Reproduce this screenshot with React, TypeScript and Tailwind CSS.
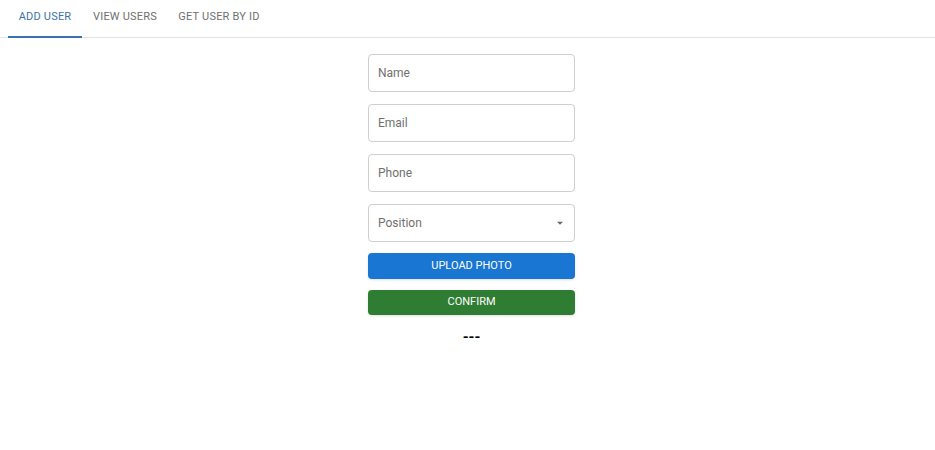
import React, { useState } from "react";

const tabs = ["ADD USER", "VIEW USERS", "GET USER BY ID"];

function Field({ label }: { label: string }) {
  return (
    <div className="h-[38px] w-full rounded border border-[#cfcfcf] flex items-center px-[9px] text-[12px] text-[#707070]">
      {label}
    </div>
  );
}

export default function App() {
  const [tab, setTab] = useState(0);

  return (
    <div className="min-h-[450px] bg-white" style={{ fontFamily: "Roboto, 'Liberation Sans', sans-serif" }}>
      <div className="flex px-2 border-b border-[#e3e3e3] h-[38px]">
        {tabs.map((t, i) => (
          <button
            key={t}
            onClick={() => setTab(i)}
            className={
              "relative shrink-0 whitespace-nowrap text-center text-[11px] tracking-[0.2px] h-full pb-[2px] " +
              (i === tab ? "text-[#3a72ad]" : "text-[#707070]") +
              (i === 0 ? " w-[74px]" : i === 1 ? " w-[86px]" : " w-[102px]")
            }
          >
            {t}
            {i === tab && <span className="absolute left-0 right-0 bottom-[-1px] h-[2px] bg-[#3a72ad]" />}
          </button>
        ))}
      </div>

      <div className="flex justify-center pl-2 pt-4">
        <div className="w-[207px] flex flex-col gap-3">
          <Field label="Name" />
          <Field label="Email" />
          <Field label="Phone" />
          <div className="h-[38px] w-full rounded border border-[#cfcfcf] flex items-center justify-between px-[9px] text-[12px] text-[#707070]">
            <span>Position</span>
            <svg width="10" height="10" viewBox="0 0 24 24">
              <path d="M7 10l5 5 5-5z" fill="#666" transform="scale(1.4) translate(-3.4 -3.4)" />
            </svg>
          </div>
          <button className="h-[26px] -mt-[1px] w-full rounded bg-[#1976d2] text-white text-[11px] shadow-sm">
            UPLOAD PHOTO
          </button>
          <button className="h-[25px] -mt-[1px] w-full rounded bg-[#2e7d32] text-white text-[11px] shadow-sm">
            CONFIRM
          </button>
          <div className="text-center font-bold text-[15px] text-black leading-none mt-[3px]">---</div>
        </div>
      </div>
    </div>
  );
}
